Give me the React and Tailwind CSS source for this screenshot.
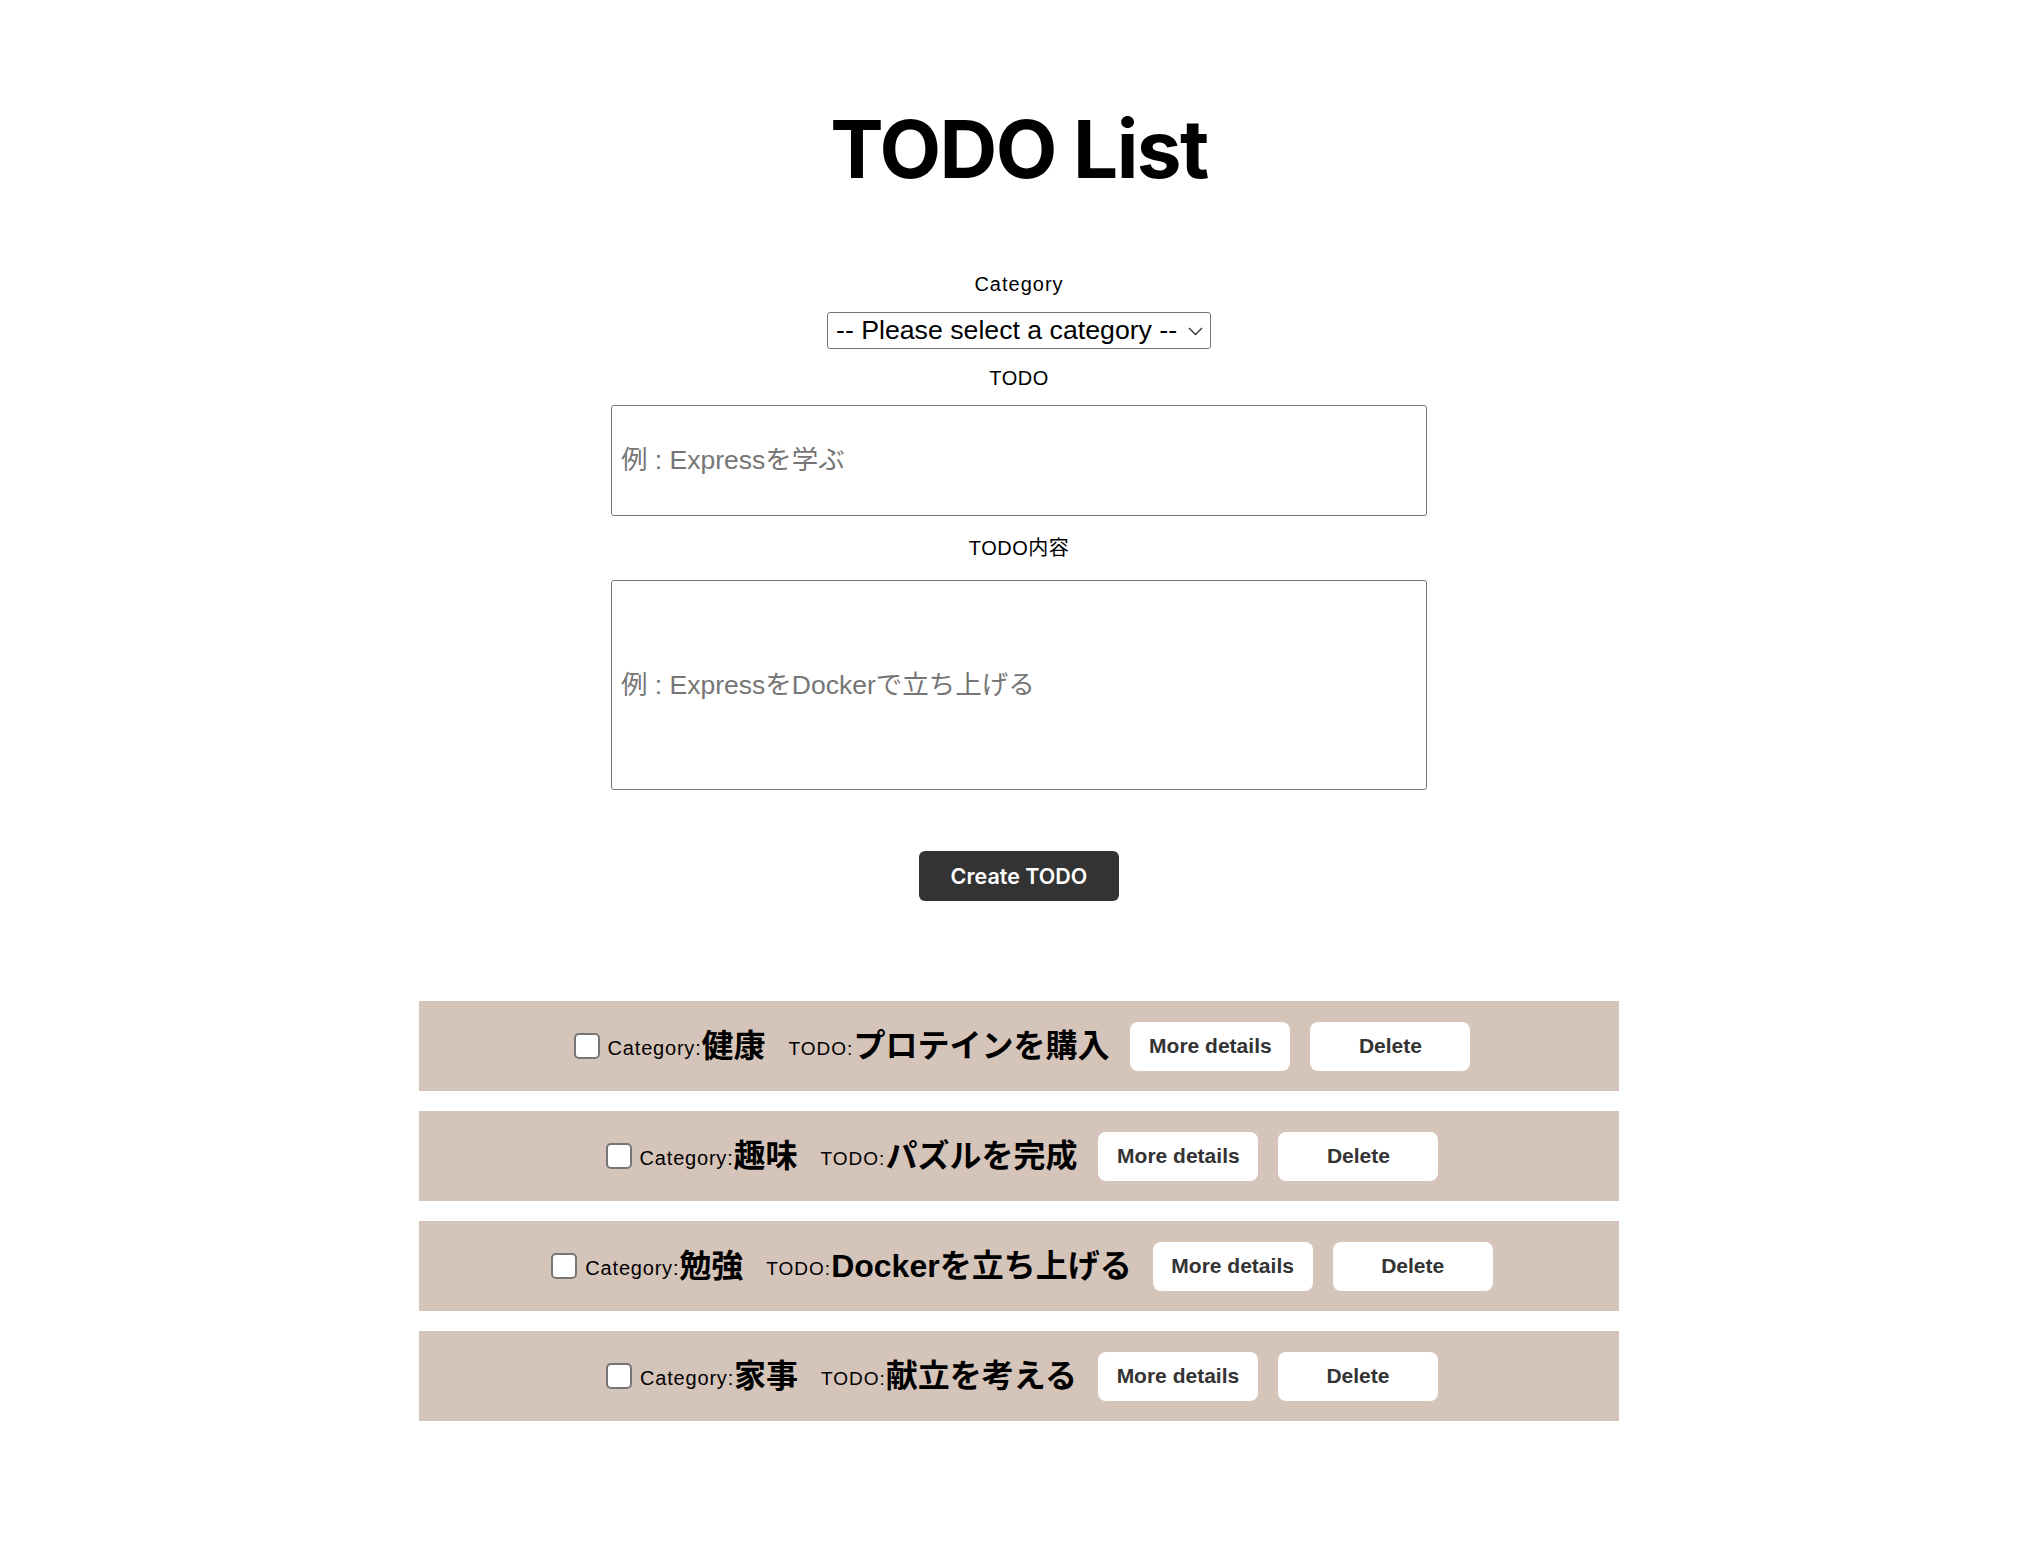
import { useState } from "react"

const todos = [
  { id: 1, category: "健康", title: "プロテインを購入" },
  { id: 2, category: "趣味", title: "パズルを完成" },
  { id: 3, category: "勉強", title: "Dockerを立ち上げる" },
  { id: 4, category: "家事", title: "献立を考える" },
]

const sans = "font-['Liberation_Sans','Noto_Sans_CJK_JP',sans-serif]"

function TodoRow({ todo }) {
  const [done, setDone] = useState(false)

  return (
    <li className="flex h-[90px] items-center justify-center bg-[#d5c4b9] pl-[6px]">
      <input
        type="checkbox"
        checked={done}
        onChange={() => setDone(!done)}
        className="mr-[8px] h-[26px] w-[26px] appearance-none rounded-[5px] border-2 border-[#767676] bg-white"
      />
      <span className="flex items-baseline leading-none">
        <span className="-translate-y-[2px] text-[20px] tracking-[0.8px]">Category:</span>
        <span className="text-[32px] font-bold">{todo.category}</span>
        <span className="ml-[23px] -translate-y-[2px] text-[19px] tracking-[1px]">TODO:</span>
        <span className="text-[32px] font-bold">{todo.title}</span>
      </span>
      <button className="ml-[21px] h-[49px] w-[160px] rounded-[8px] bg-white text-[21px] font-bold text-[#333]">
        More details
      </button>
      <button className="ml-[20px] h-[49px] w-[160px] rounded-[8px] bg-white text-[21px] font-bold text-[#333]">
        Delete
      </button>
    </li>
  )
}

export default function App() {
  return (
    <div className={`min-h-screen bg-white pb-[140px] pl-[4px] text-black ${sans}`}>
      <div className="flex flex-col items-center pt-[109px]">
        <h1 className="font-['Inter',sans-serif] text-[80px] font-bold leading-none tracking-[-0.02em]">
          TODO List
        </h1>

        {/* Form */}
        <label className="mt-[83px] text-[20px] leading-[24px] tracking-[1px]">Category</label>
        <div className="relative mt-[16px]">
          <select className="h-[37px] w-[384px] appearance-none rounded-[3px] border border-[#767676] bg-white pl-[8px] pr-[30px] text-[26.7px] leading-none text-black">
            <option>-- Please select a category --</option>
            <option>健康</option>
            <option>趣味</option>
            <option>勉強</option>
            <option>家事</option>
          </select>
          <svg
            className="pointer-events-none absolute right-[8px] top-[15px]"
            width="15"
            height="9"
            viewBox="0 0 15 9"
            fill="none"
          >
            <path d="M1 1l6.5 6.5L14 1" stroke="#333" strokeWidth="1.4" />
          </svg>
        </div>

        <label className="mt-[17px] text-[20px] leading-[24px] tracking-[0.5px]">TODO</label>
        <input
          type="text"
          placeholder="例 : Expressを学ぶ"
          className="mt-[15px] h-[111px] w-[816px] rounded-[3px] border border-[#767676] px-[9px] text-[26.5px] placeholder:text-[#767676]"
        />

        <label className="mt-[20px] text-[20px] leading-[24px] tracking-[0.5px]">TODO内容</label>
        <input
          type="text"
          placeholder="例 : ExpressをDockerで立ち上げる"
          className="mt-[20px] h-[210px] w-[816px] rounded-[3px] border border-[#767676] px-[9px] text-[26.5px] placeholder:text-[#767676]"
        />

        <button className="mt-[61px] h-[50px] w-[200px] rounded-[6px] bg-[#333] font-['Inter',sans-serif] text-[21.5px] font-semibold text-white">
          Create TODO
        </button>
      </div>

      {/* List */}
      <ul className="mx-auto mt-[100px] flex w-[1200px] flex-col gap-[20px]">
        {todos.map((todo) => (
          <TodoRow key={todo.id} todo={todo} />
        ))}
      </ul>
    </div>
  )
}
